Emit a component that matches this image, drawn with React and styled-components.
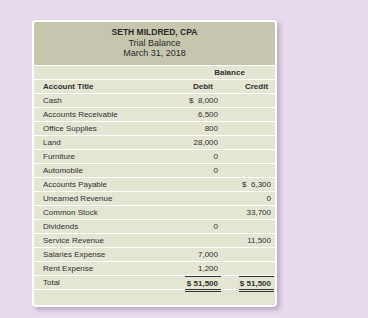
import React from 'react'
import styled, { createGlobalStyle } from 'styled-components'

const GlobalStyle = createGlobalStyle`
  body {
    margin: 0;
    background: #e6daec;
    font-family: "Liberation Sans", Arial, sans-serif;
  }
`

const Page = styled.div`
  width: 368px;
  height: 318px;
  padding: 20px 0 0 32px;
  box-sizing: border-box;
`

const Card = styled.div`
  width: 245px;
  border: 2px solid #ffffff;
  border-radius: 4px;
  box-sizing: border-box;
  background: #e4e5d3;
  overflow: hidden;
  box-shadow: 3px 3px 4px rgba(110, 80, 130, 0.35);
`

const Heading = styled.div`
  height: 43px;
  background: #c6c5ad;
  padding-top: 5px;
  box-sizing: border-box;
  text-align: center;
  color: #2a2a2a;
  font-size: 9px;
  line-height: 10.5px;
`

const Company = styled.div`
  font-weight: bold;
  font-size: 8.5px;
`

const Row = styled.div`
  display: grid;
  grid-template-columns: 1fr 36px 35px;
  column-gap: 18px;
  padding-right: 1px;
  height: 14px;
  box-sizing: border-box;
  border-top: 1px solid #ffffff;
  align-items: center;
  color: #303030;
  font-size: 8px;
  font-weight: ${(p) => (p.$bold ? 'bold' : 'normal')};
`

const Label = styled.div`
  padding-left: 9px;
`

const Amount = styled.div`
  height: 100%;
  display: flex;
  align-items: center;
  justify-content: ${(p) => (p.$center ? 'center' : 'flex-end')};
  padding-right: ${(p) => (p.$center ? '0' : '3px')};
  grid-column: ${(p) => p.$col};
  box-sizing: border-box;
  white-space: pre;
`

const TotalAmount = styled(Amount)`
  font-weight: bold;
  border-top: 1px solid #333;
  position: relative;
  &::after {
    content: '';
    position: absolute;
    left: 0;
    right: 0;
    bottom: -3px;
    height: 1px;
    border-top: 1px solid #333;
    border-bottom: 1px solid #333;
  }
`

const BalanceCell = styled.div`
  grid-column: 2 / 4;
  text-align: center;
  font-weight: bold;
`

const Blank = styled.div`
  height: 15px;
  border-top: 1px solid #ffffff;
`

const rows = [
  ['Cash', '$  8,000', ''],
  ['Accounts Receivable', '6,500', ''],
  ['Office Supplies', '800', ''],
  ['Land', '28,000', ''],
  ['Furniture', '0', ''],
  ['Automobile', '0', ''],
  ['Accounts Payable', '', '$  6,300'],
  ['Unearned Revenue', '', '0'],
  ['Common Stock', '', '33,700'],
  ['Dividends', '0', ''],
  ['Service Revenue', '', '11,500'],
  ['Salaries Expense', '7,000', ''],
  ['Rent Expense', '1,200', ''],
]

export default function App() {
  return (
    <Page>
      <GlobalStyle />
      <Card>
        <Heading>
          <Company>SETH MILDRED, CPA</Company>
          <div>Trial Balance</div>
          <div>March 31, 2018</div>
        </Heading>
        <Row $bold>
          <BalanceCell>Balance</BalanceCell>
        </Row>
        <Row $bold>
          <Label>Account Title</Label>
          <Amount $center $col={2}>Debit</Amount>
          <Amount $center $col={3}>Credit</Amount>
        </Row>
        {rows.map(([name, debit, credit]) => (
          <Row key={name}>
            <Label>{name}</Label>
            <Amount $col={2}>{debit}</Amount>
            <Amount $col={3}>{credit}</Amount>
          </Row>
        ))}
        <Row>
          <Label>Total</Label>
          <TotalAmount $col={2}>$ 51,500</TotalAmount>
          <TotalAmount $col={3}>$ 51,500</TotalAmount>
        </Row>
        <Blank />
      </Card>
    </Page>
  )
}
